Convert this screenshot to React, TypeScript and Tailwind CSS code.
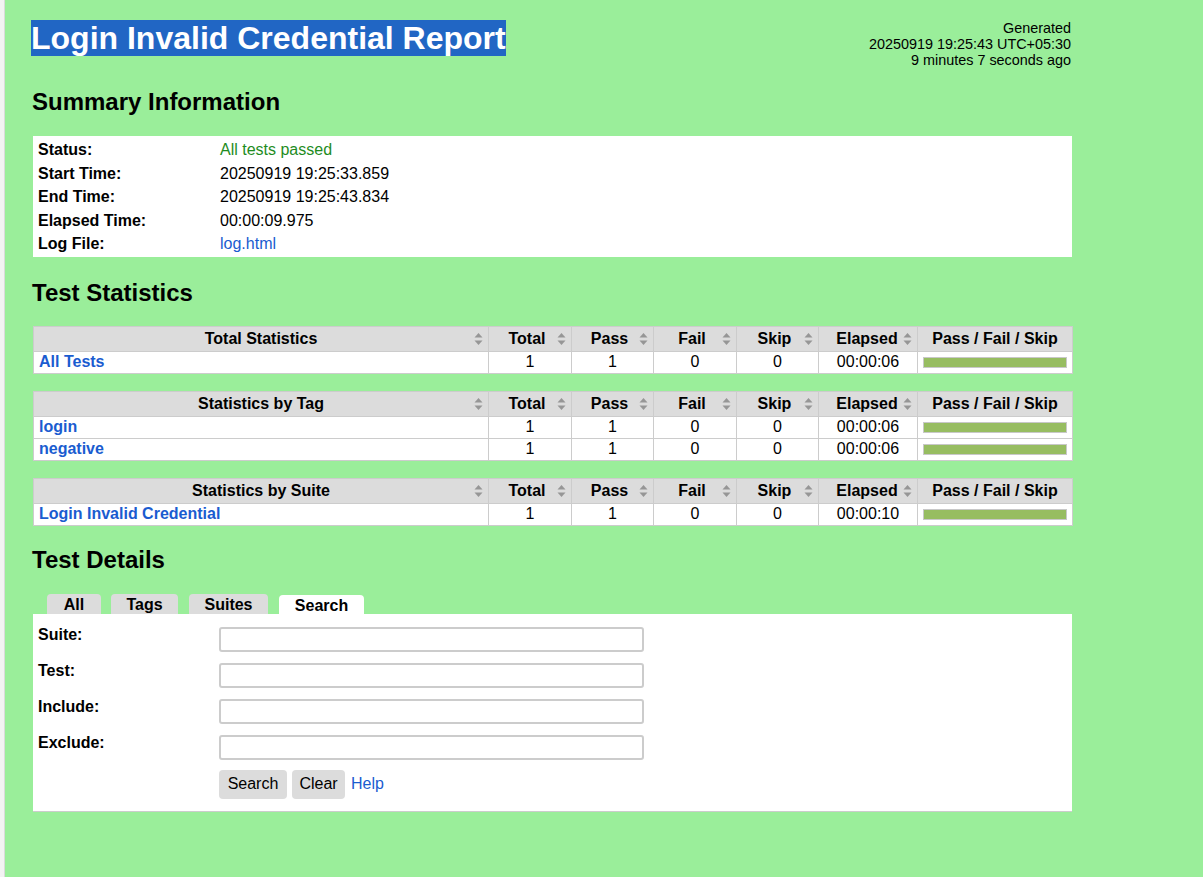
const font = { fontFamily: '"Liberation Sans", Arial, sans-serif' }

const summary = [
  { label: "Status:", value: "All tests passed", kind: "pass" },
  { label: "Start Time:", value: "20250919 19:25:33.859" },
  { label: "End Time:", value: "20250919 19:25:43.834" },
  { label: "Elapsed Time:", value: "00:00:09.975" },
  { label: "Log File:", value: "log.html", kind: "link" },
]

const tables = [
  { title: "Total Statistics", rows: [{ name: "All Tests", elapsed: "00:00:06" }] },
  {
    title: "Statistics by Tag",
    rows: [
      { name: "login", elapsed: "00:00:06" },
      { name: "negative", elapsed: "00:00:06" },
    ],
  },
  { title: "Statistics by Suite", rows: [{ name: "Login Invalid Credential", elapsed: "00:00:10" }] },
]

const columns = ["Total", "Pass", "Fail", "Skip", "Elapsed"]

function SortIcon() {
  return (
    <svg width="9" height="13" viewBox="0 0 9 13" className="absolute right-[5px] top-1/2 -translate-y-1/2">
      <polygon points="0.5,5 4.5,0.5 8.5,5" fill="#969696" />
      <polygon points="0.5,8 8.5,8 4.5,12.5" fill="#969696" />
    </svg>
  )
}

function StatTable({ title, rows }: { title: string; rows: { name: string; elapsed: string }[] }) {
  return (
    <table className="w-[1039px] border-collapse table-fixed text-[16px] text-black">
      <colgroup>
        <col className="w-[455px]" />
        <col className="w-[83px]" />
        <col className="w-[82px]" />
        <col className="w-[83px]" />
        <col className="w-[82px]" />
        <col className="w-[99px]" />
        <col className="w-[155px]" />
      </colgroup>
      <thead>
        <tr className="bg-[#dcdcdc] h-[25px]">
          <th className="relative border border-[#cccccc] font-bold text-center leading-[18px] py-[2px]">
            {title}
            <SortIcon />
          </th>
          {columns.map((c) => (
            <th
              key={c}
              className={
                c === "Elapsed"
                  ? "relative border border-[#cccccc] font-bold text-center leading-[18px] py-[2px] pr-[2px]"
                  : "relative border border-[#cccccc] font-bold text-center leading-[18px] py-[2px] pr-[6px]"
              }
            >
              {c}
              <SortIcon />
            </th>
          ))}
          <th className="border border-[#cccccc] font-bold text-center leading-[18px] py-[2px]">Pass / Fail / Skip</th>
        </tr>
      </thead>
      <tbody>
        {rows.map((r) => (
          <tr key={r.name} className="bg-white h-[22px]">
            <td className="border border-[#cccccc] px-[5px] font-bold text-[#1a5cd0] leading-[18px]">{r.name}</td>
            <td className="border border-[#cccccc] text-center leading-[18px]">1</td>
            <td className="border border-[#cccccc] text-center leading-[18px]">1</td>
            <td className="border border-[#cccccc] text-center leading-[18px]">0</td>
            <td className="border border-[#cccccc] text-center leading-[18px]">0</td>
            <td className="border border-[#cccccc] text-center leading-[18px]">{r.elapsed}</td>
            <td className="border border-[#cccccc] px-[5px]">
              <div className="h-[11px] border border-[#c8c8c8] bg-[#97bd61]" />
            </td>
          </tr>
        ))}
      </tbody>
    </table>
  )
}

export default function App() {
  return (
    <div className="flex min-h-screen bg-[#9aee9a] text-black" style={font}>
      <div className="w-[5px] shrink-0 bg-[#f3f3f3] border-r border-[#dadada]" />
      <div className="ml-[28px] w-[1039px] pt-[20px] pb-[40px]">
        <div className="flex justify-between items-start h-[37px]">
          <h1 className="-ml-[2px] text-[32px] font-bold leading-[37px]">
            <span className="bg-[#2166c4] text-white">Login Invalid Credential Report</span>
          </h1>
          <div className="text-right text-[14.4px] leading-[16px] mr-[1px]">
            <div>Generated</div>
            <div>20250919 19:25:43 UTC+05:30</div>
            <div>9 minutes 7 seconds ago</div>
          </div>
        </div>

        <h2 className="mt-[31px] text-[24px] font-bold leading-[27px] -ml-[1px]">Summary Information</h2>
        <div className="mt-[21px] bg-white pt-[2.5px] pb-[0.5px] text-[16px]">
          {summary.map((s) => (
            <div key={s.label} className="flex items-center h-[23.5px]">
              <div className="w-[187px] pl-[5px] font-bold">{s.label}</div>
              <div
                className={
                  s.kind === "pass" ? "text-[#1e8c1e]" : s.kind === "link" ? "text-[#1a5cd0]" : "text-black"
                }
              >
                {s.value}
              </div>
            </div>
          ))}
        </div>

        <h2 className="mt-[22px] text-[24px] font-bold leading-[27px] -ml-[1px]">Test Statistics</h2>
        <div className="mt-[20px] flex flex-col gap-[17px]">
          {tables.map((t) => (
            <StatTable key={t.title} title={t.title} rows={t.rows} />
          ))}
        </div>

        <h2 className="mt-[20px] text-[24px] font-bold leading-[27px] -ml-[1px]">Test Details</h2>
        <div className="mt-[21px] flex items-end pl-[14px] text-[16px] font-bold">
          <div className="w-[54px] h-[20px] text-center leading-[21px] bg-[#dcdcdc] rounded-t-[4px]">All</div>
          <div className="ml-[10px] w-[67px] h-[20px] text-center leading-[21px] bg-[#dcdcdc] rounded-t-[4px]">Tags</div>
          <div className="ml-[11px] w-[79px] h-[20px] text-center leading-[21px] bg-[#dcdcdc] rounded-t-[4px]">Suites</div>
          <div className="ml-[11px] w-[85px] h-[19px] text-center leading-[21px] bg-white rounded-t-[4px]">Search</div>
        </div>
        <div className="bg-white border-b border-[#cccccc] pt-[12px] pb-[12px] text-[16px]">
          {["Suite:", "Test:", "Include:", "Exclude:"].map((l) => (
            <div key={l} className="flex items-start h-[36px]">
              <div className="w-[186px] pl-[5px] font-bold leading-[18px]">{l}</div>
              <input className="mt-[1px] w-[425px] h-[25px] border-2 border-[#cccccc] rounded-[3px] bg-white outline-none" />
            </div>
          ))}
          <div className="flex items-center pl-[186px]">
            <button className="w-[68px] h-[29px] bg-[#dcdcdc] rounded-[4px] text-[16px] leading-[18px]">Search</button>
            <button className="ml-[5px] w-[53px] h-[29px] bg-[#dcdcdc] rounded-[4px] text-[16px] leading-[18px]">Clear</button>
            <span className="ml-[6px] text-[#1a5cd0] leading-[18px]">Help</span>
          </div>
        </div>
      </div>
    </div>
  )
}
